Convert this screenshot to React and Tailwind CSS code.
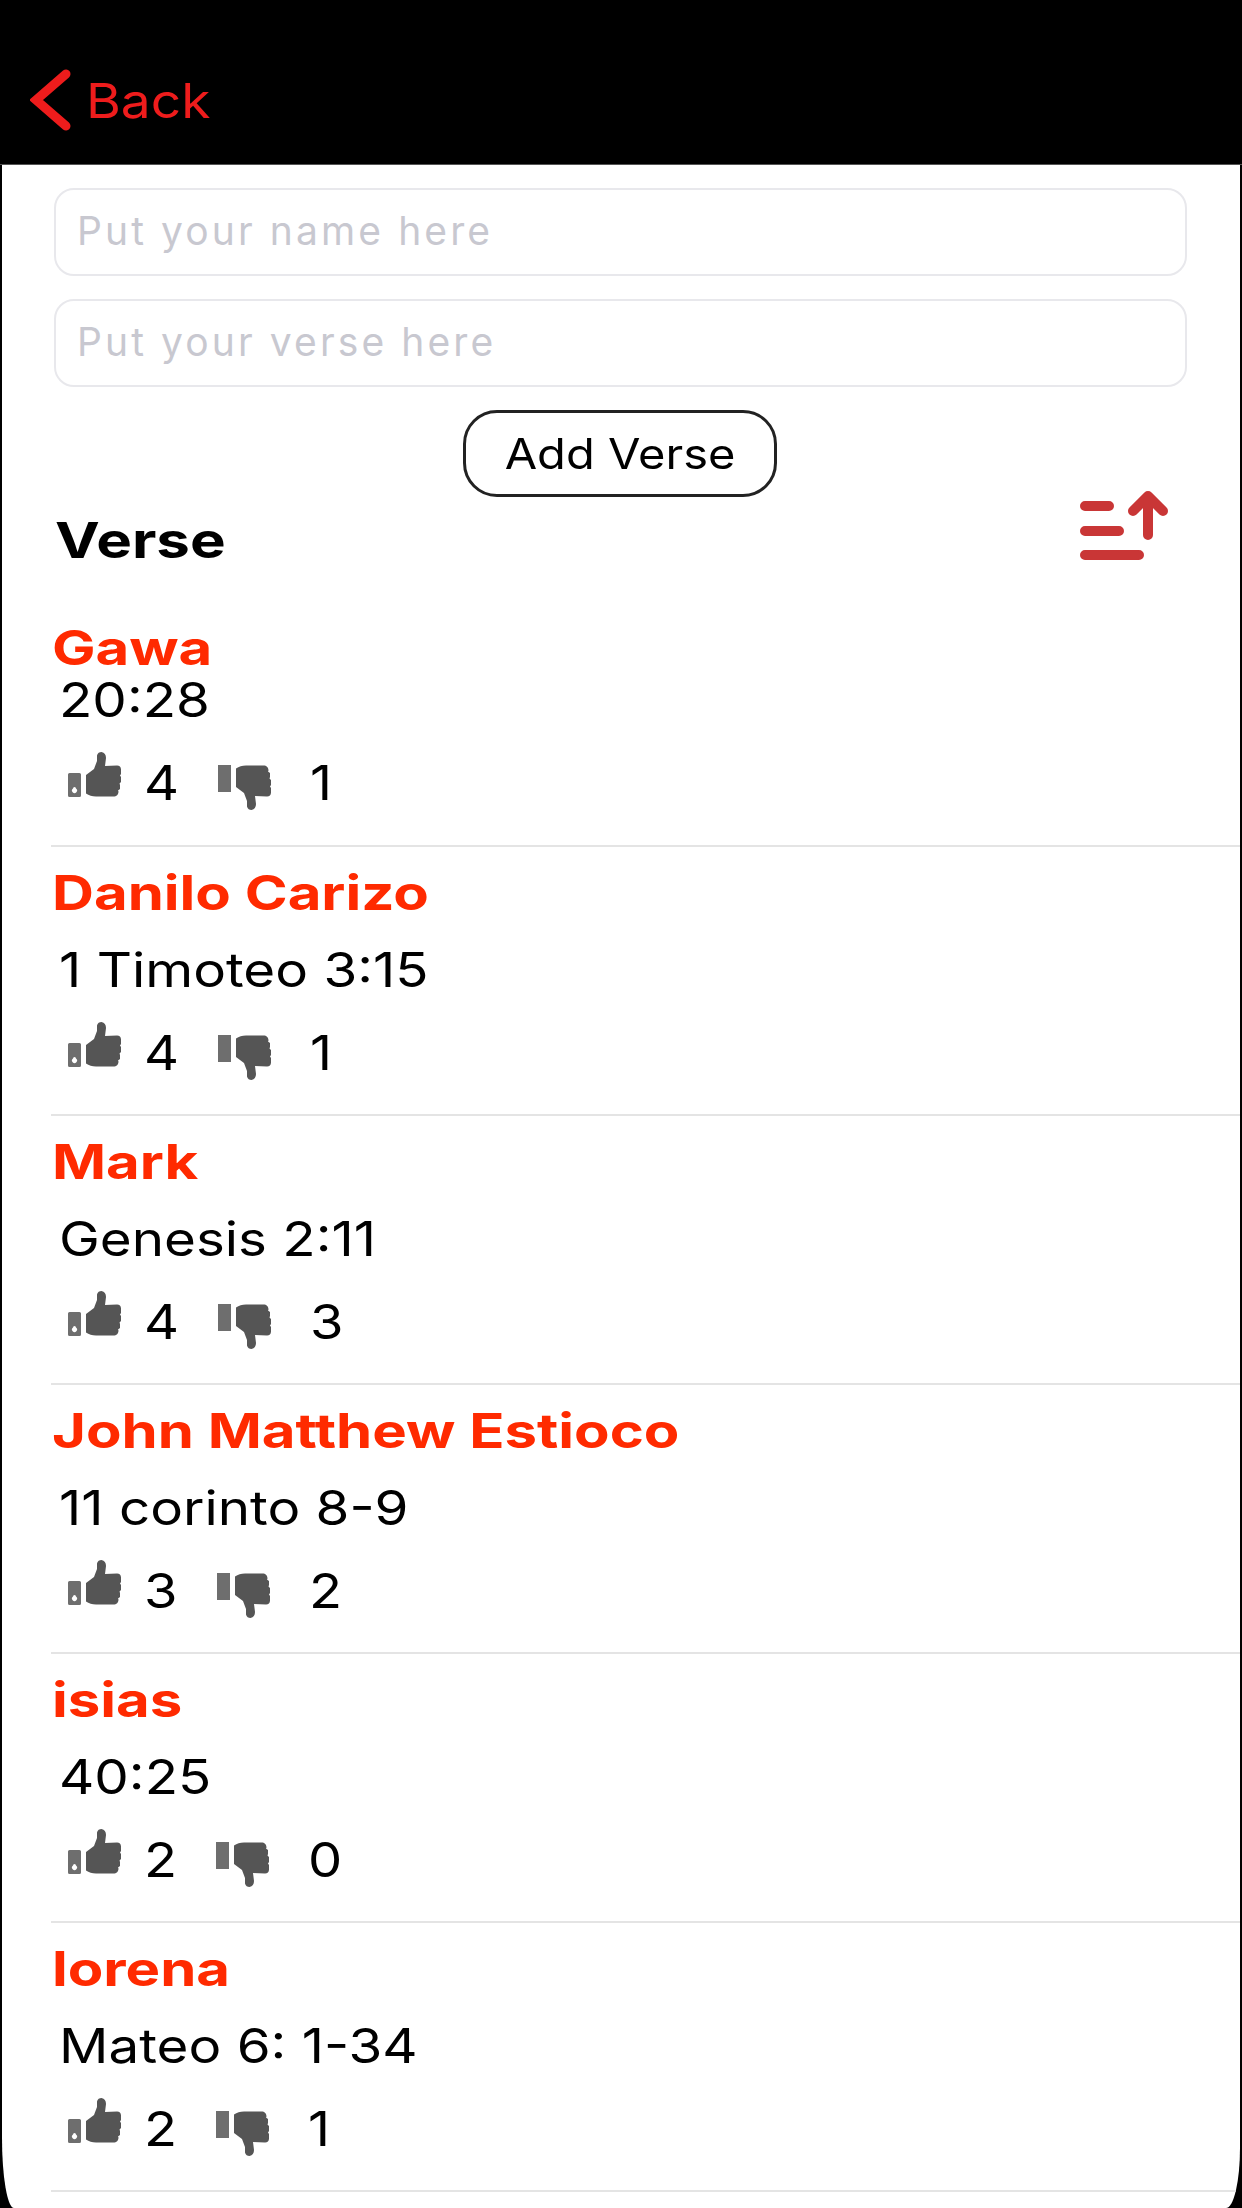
const verses = [
  { name: "Gawa", verse: "20:28", up: 4, down: 1, first: true },
  { name: "Danilo Carizo", verse: "1 Timoteo 3:15", up: 4, down: 1 },
  { name: "Mark", verse: "Genesis 2:11", up: 4, down: 3 },
  { name: "John Matthew Estioco", verse: "11 corinto 8-9", up: 3, down: 2 },
  { name: "isias", verse: "40:25", up: 2, down: 0 },
  { name: "lorena", verse: "Mateo 6: 1-34", up: 2, down: 1 },
];

function Thumb({ down }) {
  return (
    <svg
      viewBox="0 0 53 46"
      className={`w-[53px] h-[46px] shrink-0 blur-[0.6px] ${down ? "-scale-y-100 translate-y-[4px]" : "-translate-y-[8px]"}`}
      fill="#555555"
    >
      {down ? (
        <path d="M0 18h13v27H0z" fillOpacity="0.85" />
      ) : (
        <path d="M1.500 21h10a1.500 1.500 0 0 1 1.500 1.500v21a1.500 1.500 0 0 1-1.500 1.500h-10A1.500 1.500 0 0 1 0 43.500v-21A1.500 1.500 0 0 1 1.500 21zM5 36.500a2.500 2.500 0 1 0 3 0 1.500 1.500 0 0 0-3 0z" fillRule="evenodd" fillOpacity="0.85" />
      )}
      <path d="M18 23l8-6 3-8V3.500C29.500 1 31.500 0 33.500 0 36.500.5 38 3 38 6l-1 8 12-.5c2.500 0 4 1.500 4 4v4.500l-1 1.500 1 1.500v5l-1.500 1.500.5 1.500v4l-2 1.500.5 1c0 3-2 5-5 5H28c-4 0-7-1-10-3z" />
    </svg>
  );
}

function VerseRow({ name, verse, up, down, first }) {
  return (
    <div className={`h-[269px] ml-[49px] border-b-2 border-[#e4e4e4] ${first ? "pt-[42px]" : "pt-[18px]"}`}>
      <div className="h-[56px] flex items-center pl-[1px] text-[48px] leading-[44px] font-bold text-[#ff2a00]">
        <span className="inline-block origin-left scale-x-[1.21] whitespace-nowrap">{name}</span>
      </div>
      <div className={`h-[56px] flex items-center pl-[8px] text-[48px] leading-[44px] text-black ${first ? "-mt-[4px]" : "mt-[21px]"}`}>
        <span className="inline-block origin-left scale-x-[1.14] whitespace-nowrap">{verse}</span>
      </div>
      <div className="h-[56px] mt-[27px] flex items-center pl-[17px] text-[48px] text-black">
        <Thumb />
        <span className="ml-[23px] inline-block origin-left scale-x-[1.13]">{up}</span>
        <span className="ml-[43px] flex items-center"><Thumb down /></span>
        <span className="ml-[39px] inline-block origin-left scale-x-[1.13]">{down}</span>
      </div>
    </div>
  );
}

export default function App() {
  return (
    <div className="w-[1242px] h-[2208px] bg-black overflow-hidden flex flex-col font-['Inter',sans-serif]">
      {/* Nav bar */}
      <div className="h-[165px] shrink-0 flex items-end pb-[30px] pl-[30px] border-b border-[#555555]">
        <svg viewBox="0 0 42 62" className="w-[42px] h-[62px] mb-[3px]" fill="none" stroke="#ee1c1c" strokeWidth="9" strokeLinecap="round" strokeLinejoin="miter">
          <path d="M36 5L6 31l30 26" />
        </svg>
        <span className="ml-[14px] mb-[1px] text-[48px] leading-[64px] text-[#ee1c1c] inline-block origin-left scale-x-[1.11]">Back</span>
      </div>

      <div className="flex-1 mx-[2px] bg-white rounded-bl-[12px_70px] rounded-br-[14px_60px] overflow-hidden">
        <input
          placeholder="Put your name here"
          className="block w-[1133px] h-[88px] ml-[52px] mt-[23px] px-[21px] pb-[3px] rounded-[20px] border-2 border-[#e8e8ec] text-[39px] tracking-[3.1px] outline-none placeholder:text-[#c8c8d0]"
        />
        <input
          placeholder="Put your verse here"
          className="block w-[1133px] h-[88px] ml-[52px] mt-[23px] px-[21px] pb-[3px] rounded-[20px] border-2 border-[#e8e8ec] text-[39px] tracking-[3.1px] outline-none placeholder:text-[#c8c8d0]"
        />
        <div className="mt-[23px] flex justify-center pr-[2px]">
          <button className="w-[314px] h-[87px] rounded-[34px] border-[3px] border-[#222222] text-[42px] text-black bg-white">
            <span className="inline-block scale-x-[1.12]">Add Verse</span>
          </button>
        </div>

        <div className="h-[81px] flex items-start justify-between pl-[53px] pr-[65px]">
          <div className="mt-[13px] h-[60px] flex items-center text-[50px] font-bold text-black">
            <span className="inline-block origin-left scale-x-[1.2]">Verse</span>
          </div>
          <svg viewBox="0 0 100 80" className="w-[100px] h-[80px] -mt-[11px] blur-[0.5px]" fill="none" stroke="#c93636" strokeWidth="10" strokeLinecap="round" strokeLinejoin="round">
            <path d="M10 20h24M10 45h34M10 69h54" />
            <path d="M73 49V10M58 25l15-15 15 15" />
          </svg>
        </div>

        {verses.map((v) => (
          <VerseRow key={v.name} {...v} />
        ))}
      </div>
    </div>
  );
}
